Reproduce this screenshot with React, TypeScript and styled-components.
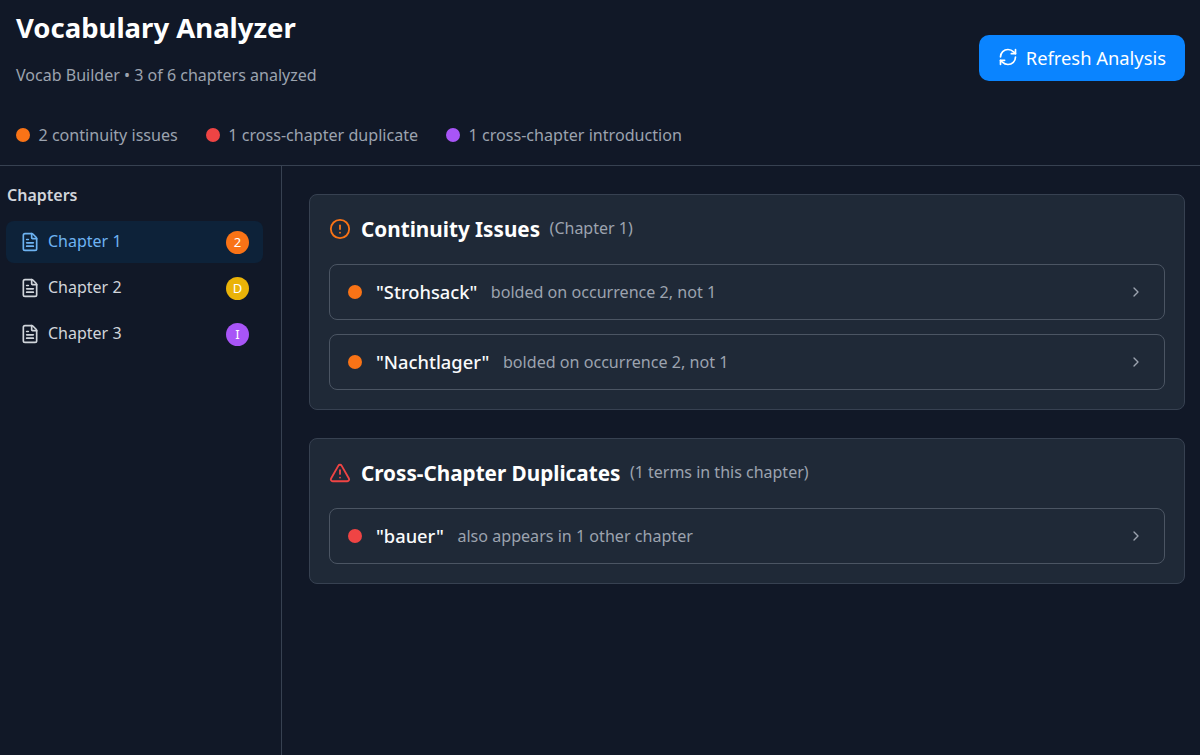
import { ChevronRight, CircleAlert, FileText, RefreshCw, TriangleAlert } from "lucide-react";
import styled, { createGlobalStyle } from "styled-components";

const GlobalStyle = createGlobalStyle`
  html, body {
    margin: 0;
    height: 100%;
    background: #111827;
  }
  * {
    box-sizing: border-box;
  }
`;

const Page = styled.div`
  height: 755px;
  overflow: hidden;
  display: flex;
  flex-direction: column;
  background: #111827;
  font-family: "Noto Sans", sans-serif;
  color: #f9fafb;
`;

const Header = styled.header`
  height: 166px;
  flex-shrink: 0;
  padding: 8px 15px 0 16px;
  border-bottom: 1px solid #374151;
`;

const HeaderTop = styled.div`
  display: flex;
  justify-content: space-between;
  align-items: flex-start;
`;

const Title = styled.h1`
  margin: 0;
  font-size: 27.5px;
  line-height: 40px;
  font-weight: 700;
  color: #fff;
`;

const Subtitle = styled.p`
  margin: 16px 0 0;
  font-size: 16.05px;
  line-height: 22px;
  color: #9ca3af;
`;

const RefreshButton = styled.button`
  display: flex;
  align-items: center;
  gap: 7.5px;
  height: 46px;
  margin-top: 27px;
  padding: 0 19px 2px;
  border: 0;
  border-radius: 10px;
  background: #0a84ff;
  color: #fff;
  font-family: inherit;
  font-size: 18.35px;
`;

const Summary = styled.div`
  display: flex;
  gap: 28px;
  margin-top: 38px;
`;

const SummaryItem = styled.span`
  display: flex;
  align-items: center;
  gap: 8.5px;
  font-size: 16.1px;
  line-height: 22px;
  color: #9ca3af;
`;

const Dot = styled.span<{ $color: string }>`
  width: 14px;
  height: 14px;
  flex-shrink: 0;
  border-radius: 50%;
  background: ${(p) => p.$color};
`;

const Body = styled.div`
  flex: 1;
  display: flex;
  min-height: 0;
`;

const Sidebar = styled.aside`
  width: 282px;
  flex-shrink: 0;
  padding: 18px 18px 0 6px;
  border-right: 1px solid #374151;
`;

const SidebarTitle = styled.h2`
  margin: 0 0 15px 1px;
  font-size: 16px;
  line-height: 22px;
  font-weight: 600;
  color: #d1d5db;
`;

const ChapterList = styled.div`
  display: flex;
  flex-direction: column;
  gap: 4px;
`;

const ChapterRow = styled.div<{ $active?: boolean }>`
  display: flex;
  align-items: center;
  gap: 8px;
  height: 42px;
  padding: 0 14px;
  border-radius: 8px;
  font-size: 16px;
  background: ${(p) => (p.$active ? "#0d2239" : "transparent")};
  color: ${(p) => (p.$active ? "#6db3f2" : "#d1d5db")};
`;

const ChapterName = styled.span`
  flex: 1;
  margin-bottom: 2px;
`;

const Badge = styled.span<{ $color: string }>`
  width: 23px;
  height: 23px;
  display: flex;
  align-items: center;
  justify-content: center;
  border-radius: 50%;
  background: ${(p) => p.$color};
  color: #fff;
  font-size: 13px;
`;

const Main = styled.main`
  flex: 1;
  display: flex;
  flex-direction: column;
  gap: 28px;
  padding: 28px 15px 0 27px;
`;

const Card = styled.section`
  display: flex;
  flex-direction: column;
  gap: 14px;
  padding: 14px 19px 19px;
  border: 1px solid #374151;
  border-radius: 8px;
  background: #1f2937;
`;

const CardHead = styled.div`
  display: flex;
  align-items: center;
  height: 40px;
  margin-bottom: 1px;
`;

const CardTitle = styled.h3`
  margin: 0 9.5px 0 10px;
  font-size: 20.7px;
  line-height: 28px;
  font-weight: 700;
  color: #fff;
`;

const CardNote = styled.span`
  font-size: 16px;
  margin-bottom: 2px;
  color: #9ca3af;
`;

const Issue = styled.div`
  display: flex;
  align-items: center;
  height: 56px;
  padding: 0 20px 0 18px;
  border: 1px solid #4b5563;
  border-radius: 8px;
`;

const IssueTerm = styled.span`
  margin: 0 13.5px 2px 14px;
  font-size: 18.3px;
  font-weight: 500;
  color: #f9fafb;
`;

const IssueText = styled.span`
  flex: 1;
  font-size: 16.1px;
  color: #9ca3af;
`;

const chapters = [
  { name: "Chapter 1", badge: "2", color: "#f97316", active: true },
  { name: "Chapter 2", badge: "D", color: "#eab308", active: false },
  { name: "Chapter 3", badge: "I", color: "#a855f7", active: false },
];

function IssueRow({ color, term, text }: { color: string; term: string; text: string }) {
  return (
    <Issue>
      <Dot $color={color} />
      <IssueTerm>{term}</IssueTerm>
      <IssueText>{text}</IssueText>
      <ChevronRight size={16} color="#9ca3af" />
    </Issue>
  );
}

function App() {
  return (
    <Page>
      <GlobalStyle />
      <Header>
        <HeaderTop>
          <div>
            <Title>Vocabulary Analyzer</Title>
            <Subtitle>Vocab Builder • 3 of 6 chapters analyzed</Subtitle>
          </div>
          <RefreshButton>
            <RefreshCw size={20} />
            Refresh Analysis
          </RefreshButton>
        </HeaderTop>
        <Summary>
          <SummaryItem>
            <Dot $color="#f97316" />2 continuity issues
          </SummaryItem>
          <SummaryItem>
            <Dot $color="#ef4444" />1 cross-chapter duplicate
          </SummaryItem>
          <SummaryItem>
            <Dot $color="#a855f7" />1 cross-chapter introduction
          </SummaryItem>
        </Summary>
      </Header>
      <Body>
        <Sidebar>
          <SidebarTitle>Chapters</SidebarTitle>
          <ChapterList>
            {chapters.map((c) => (
              <ChapterRow key={c.name} $active={c.active}>
                <FileText size={20} />
                <ChapterName>{c.name}</ChapterName>
                <Badge $color={c.color}>{c.badge}</Badge>
              </ChapterRow>
            ))}
          </ChapterList>
        </Sidebar>
        <Main>
          <Card>
            <CardHead>
              <CircleAlert size={22} color="#f97316" />
              <CardTitle>Continuity Issues</CardTitle>
              <CardNote>(Chapter 1)</CardNote>
            </CardHead>
            <IssueRow color="#f97316" term={'"Strohsack"'} text="bolded on occurrence 2, not 1" />
            <IssueRow color="#f97316" term={'"Nachtlager"'} text="bolded on occurrence 2, not 1" />
          </Card>
          <Card>
            <CardHead>
              <TriangleAlert size={22} color="#ef4444" />
              <CardTitle>Cross-Chapter Duplicates</CardTitle>
              <CardNote>(1 terms in this chapter)</CardNote>
            </CardHead>
            <IssueRow color="#ef4444" term={'"bauer"'} text="also appears in 1 other chapter" />
          </Card>
        </Main>
      </Body>
    </Page>
  );
}

export default App;
